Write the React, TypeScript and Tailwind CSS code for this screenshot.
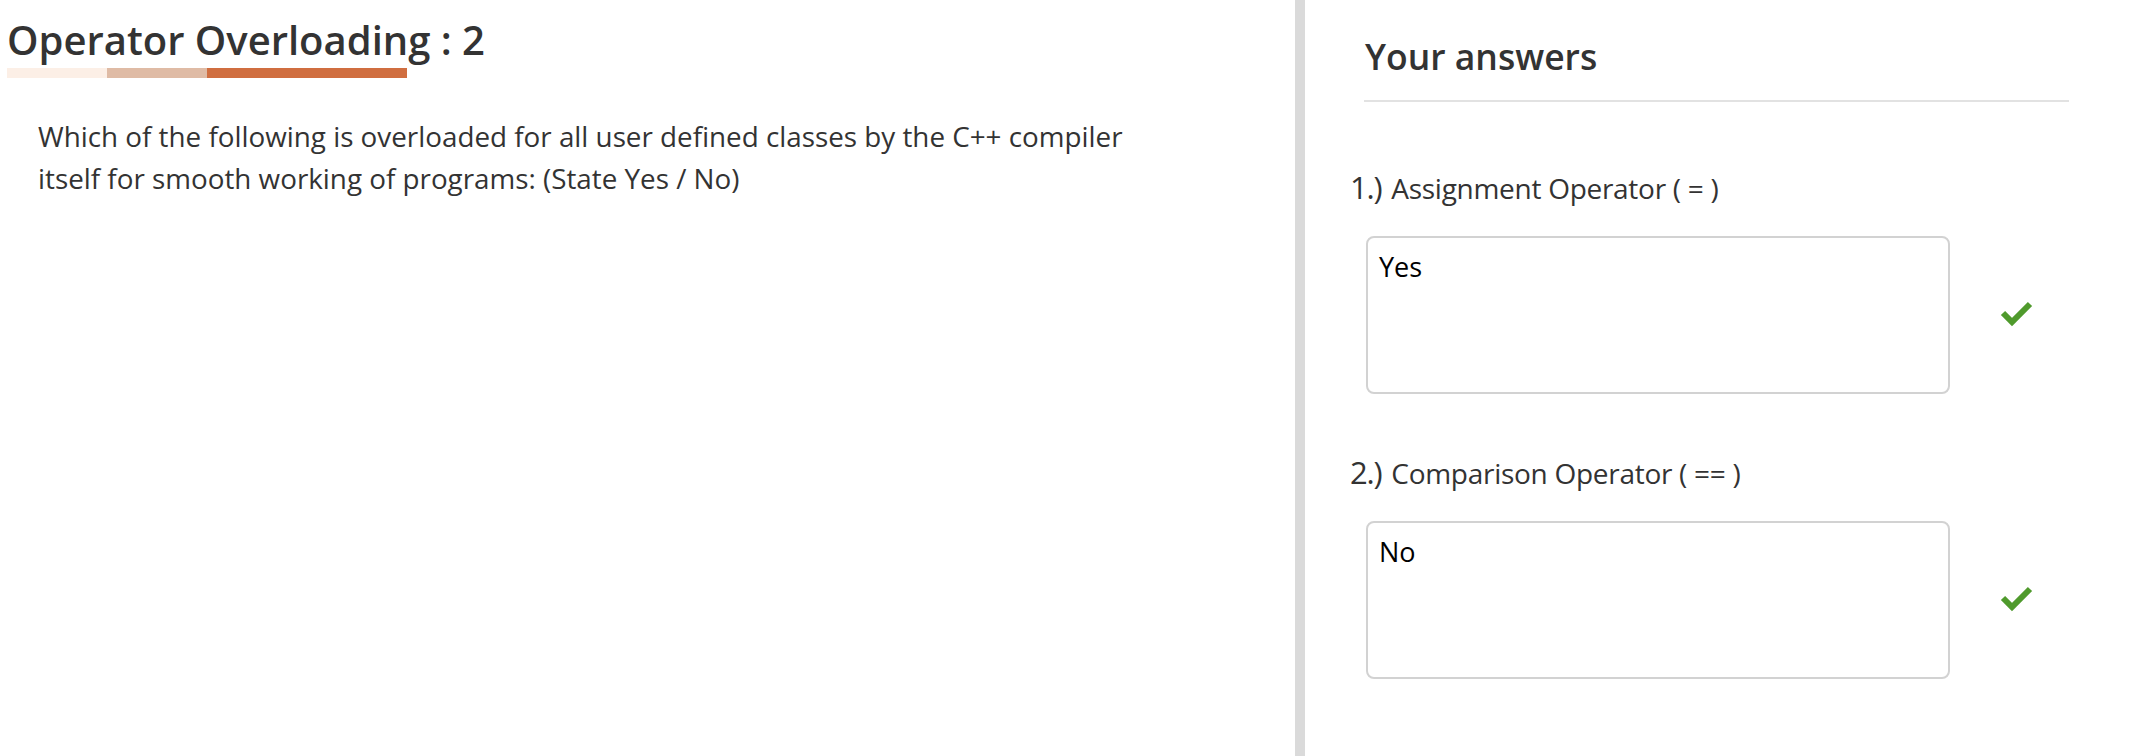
import React from 'react';

const answers = [
  { id: 1, label: 'Assignment Operator ( = )', value: 'Yes' },
  { id: 2, label: 'Comparison Operator ( == )', value: 'No' },
];

function CheckMark() {
  return (
    <svg width="34" height="28" viewBox="0 0 34 28" fill="none" aria-hidden="true">
      <polyline points="3,13 12,22 30,4" stroke="#4f9a2c" strokeWidth="6" strokeLinecap="butt" strokeLinejoin="miter" />
    </svg>
  );
}

function AnswerItem({ id, label, value, first }: { id: number; label: string; value: string; first: boolean }) {
  return (
    <div className={first ? 'mt-[65px]' : 'mt-[58px]'}>
      <div className="flex items-baseline gap-[10px] text-[#333]">
        <span className="text-[31px] leading-[40px] tracking-[-0.04em]">{id}.)</span>
        <span className="text-[28px] leading-[40px] tracking-[-0.01em]">{label}</span>
      </div>
      <div className="mt-[28px] ml-[16px] flex items-center">
        <textarea
          readOnly
          defaultValue={value}
          className="h-[158px] w-[584px] resize-none rounded-[8px] border-2 border-[#d2d2d2] bg-white px-[11px] py-[11px] text-[27px] leading-[36px] text-black outline-none"
        />
        <div className="ml-[50px] mb-[2px]">
          <CheckMark />
        </div>
      </div>
    </div>
  );
}

export default function App() {
  return (
    <div className="flex min-h-screen bg-white font-['Open_Sans','Noto_Sans',sans-serif]">
      <main className="flex-1 pt-[16px]">
        <h1 className="pl-[7px] text-[40px] leading-[48px] font-semibold text-[#333]">Operator Overloading : 2</h1>
        <div className="mt-[4px] ml-[7px] flex h-[10px] w-[400px]">
          <div className="w-[100px] bg-[#fcefe6]" />
          <div className="w-[100px] bg-[#dfbba5]" />
          <div className="w-[200px] bg-[#d06e40]" />
        </div>
        <p className="mt-[37px] ml-[38px] max-w-[1200px] text-[27.8px] leading-[42px] text-[#333]">
          Which of the following is overloaded for all user defined classes by the C++ compiler
          <br />
          itself for smooth working of programs: (State Yes / No)
        </p>
      </main>

      <div className="w-[10px] shrink-0 bg-[#dadada]" />

      <aside className="w-[839px] shrink-0 pt-[34px] pl-[45px]">
        <h2 className="pl-[15px] text-[35.5px] leading-[44px] font-semibold text-[#333]">Your answers</h2>
        <div className="mt-[22px] ml-[14px] h-[2px] w-[705px] bg-[#e2e2e2]" />
        {answers.map((a, i) => (
          <AnswerItem key={a.id} id={a.id} label={a.label} value={a.value} first={i === 0} />
        ))}
      </aside>
    </div>
  );
}
